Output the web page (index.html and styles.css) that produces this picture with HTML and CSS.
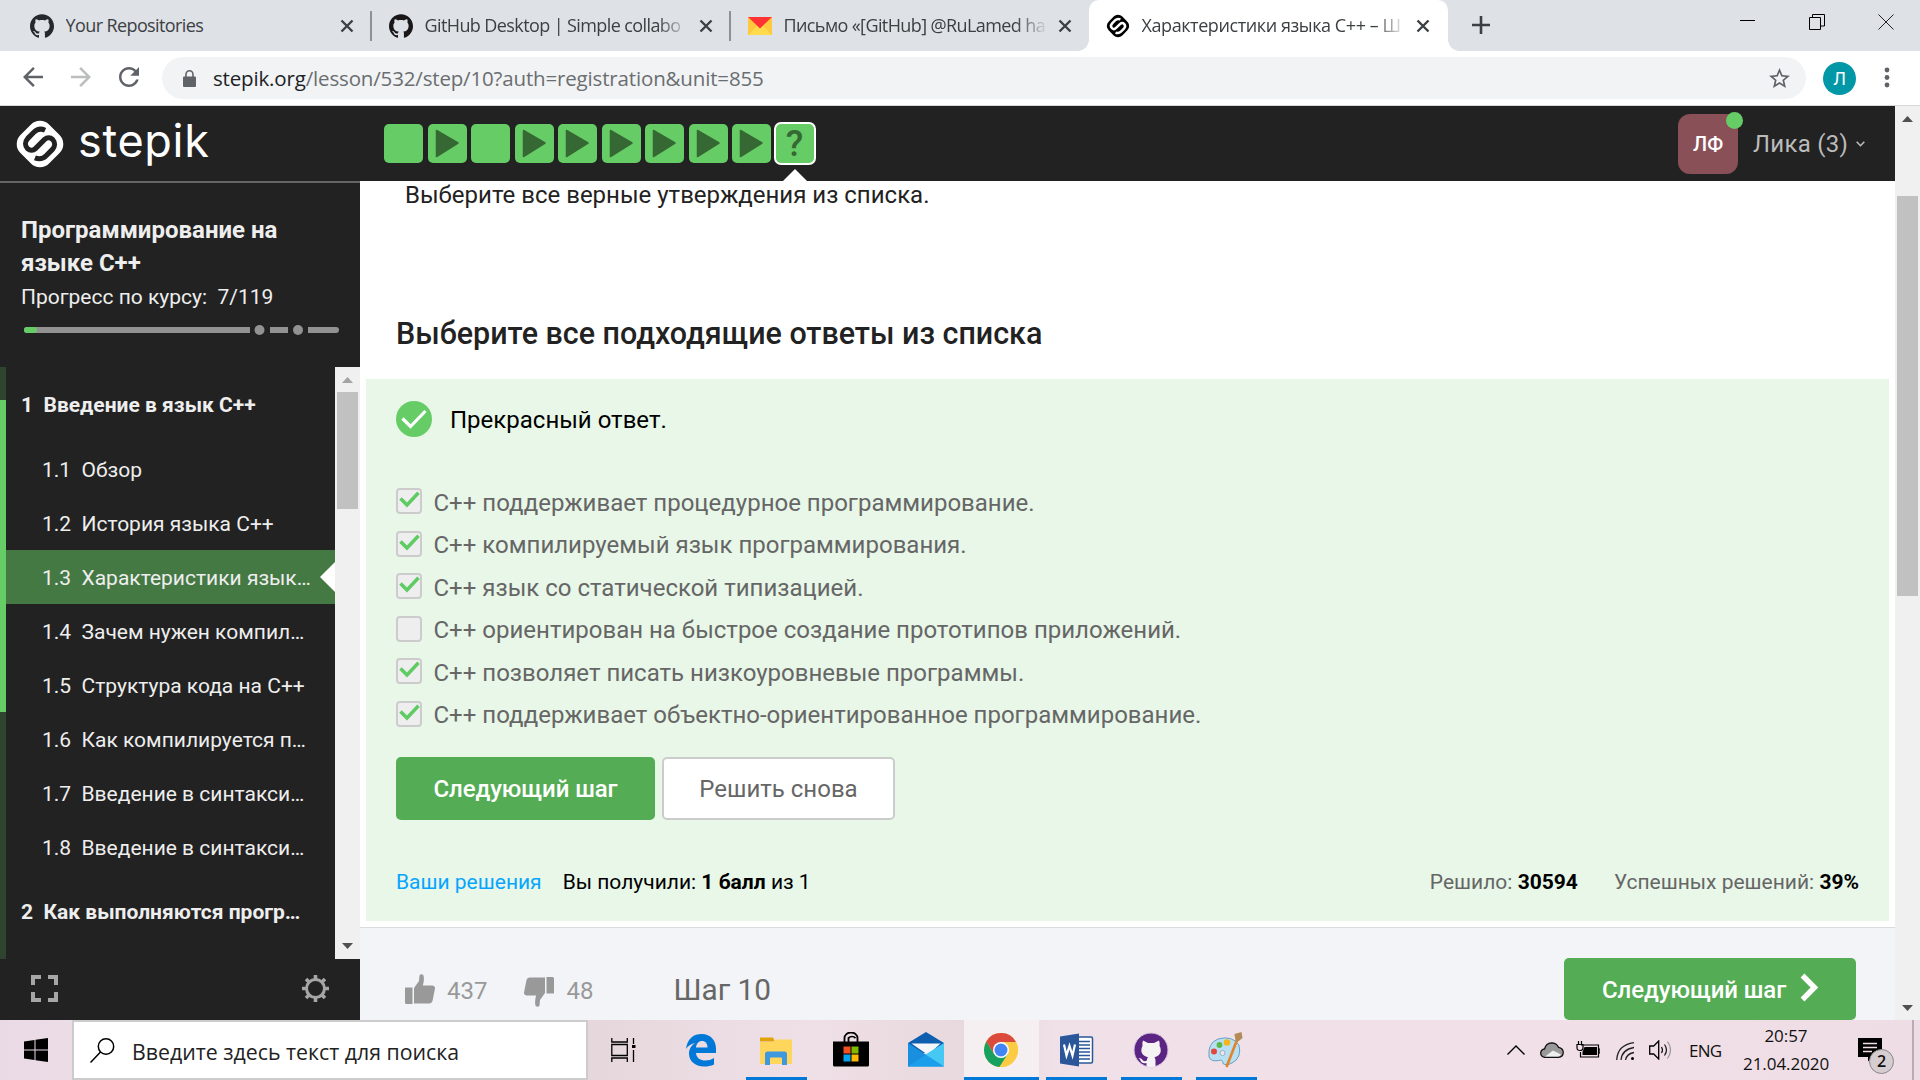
FILE: index.html
```
<!DOCTYPE html>
<html lang="ru">
<head>
<meta charset="utf-8">
<title>Характеристики языка C++ – Шаг 10 – Stepik</title>
<link rel="stylesheet" href="styles.css">
</head>
<body>
<svg class="defs" width="0" height="0">
  <symbol id="github" viewBox="0 0 24 24"><path fill="currentColor" d="M12 .297c-6.63 0-12 5.373-12 12 0 5.303 3.438 9.8 8.205 11.385.6.113.82-.258.82-.577 0-.285-.01-1.04-.015-2.04-3.338.724-4.042-1.61-4.042-1.61C4.422 18.07 3.633 17.7 3.633 17.7c-1.087-.744.084-.729.084-.729 1.205.084 1.838 1.236 1.838 1.236 1.07 1.835 2.809 1.305 3.495.998.108-.776.417-1.305.76-1.605-2.665-.3-5.466-1.332-5.466-5.93 0-1.31.465-2.38 1.235-3.22-.135-.303-.54-1.523.105-3.176 0 0 1.005-.322 3.3 1.23.96-.267 1.98-.399 3-.405 1.02.006 2.04.138 3 .405 2.28-1.552 3.285-1.23 3.285-1.23.645 1.653.24 2.873.12 3.176.765.84 1.23 1.91 1.23 3.22 0 4.61-2.805 5.625-5.475 5.92.42.36.81 1.096.81 2.22 0 1.606-.015 2.896-.015 3.286 0 .315.21.69.825.57C20.565 22.092 24 17.592 24 12.297c0-6.627-5.373-12-12-12"/></symbol>
  <symbol id="stepik" viewBox="0 0 49 49"><rect x="4.7" y="4.7" width="39.6" height="39.6" rx="12.5" transform="rotate(45 24.5 24.5)" fill="currentColor"/><path class="logo-s" d="M29.5 11C25 9 21 10.500 18.500 13L12.500 19C9.500 22.200 9.800 26.500 12.300 29C14.800 31.300 18 31 20 29L29 20C31.200 18 34.500 17.800 37 20.200C39.500 23 39.300 27 36.700 29.800L30.500 36C27.800 38.700 23.500 39.600 19.500 38" fill="none" stroke-width="5"/></symbol>
  <symbol id="close" viewBox="0 0 14 14"><path d="M1.500 1.500l11 11M12.500 1.500l-11 11" stroke="#3c4043" stroke-width="2.400" fill="none"/></symbol>
  <symbol id="play" viewBox="0 0 39 39"><path d="M8.500 6.500L30 19 8.500 32.500z" fill="#366834" stroke="#366834" stroke-width="1.500" stroke-linejoin="round"/></symbol>
  <symbol id="tick" viewBox="0 0 26 25"><path d="M4.500 10.500l6.500 6.500L22.500 4.800" stroke="#5fcb63" stroke-width="3.500" fill="none"/></symbol>
  <symbol id="thumb" viewBox="0 0 30 30"><path d="M0 13.500h7.500V30H1.500Q0 30 0 28.500zM9 14l5-7 .5-5.500Q16-.8 18.300 1q1.400 3.500-.4 10.500h9.600q2.700.3 2.500 3L27.500 27q-.7 2.300-3 2.500H9z" fill="#999"/></symbol>
</svg>

<header class="tabs">
  <div class="tab"><svg class="fav gh"><use href="#github"/></svg><span class="tab-title">Your Repositories</span><svg class="x"><use href="#close"/></svg><i class="sep"></i></div>
  <div class="tab"><svg class="fav gh2"><use href="#github"/></svg><span class="tab-title fade">GitHub Desktop | Simple collabo</span><svg class="x"><use href="#close"/></svg><i class="sep"></i></div>
  <div class="tab"><svg class="fav" viewBox="0 0 24 24"><path fill="#ffc83d" d="M0 3h24v18H0z"/><path fill="#ffdb4d" d="M0 21l9-9h6l9 9z"/><path fill="#f33" d="M0 3h24L12 14.500z"/></svg><span class="tab-title fade">Письмо «[GitHub] @RuLamed ha</span><svg class="x"><use href="#close"/></svg><i class="sep none"></i></div>
  <div class="tab active"><svg class="fav black"><use href="#stepik"/></svg><span class="tab-title fade">Характеристики языка C++ – Ш</span><svg class="x"><use href="#close"/></svg><i class="sep none"></i></div>
  <svg class="plus" viewBox="0 0 18 18"><path d="M9 0v18M0 9h18" stroke="#3c4043" stroke-width="2.600"/></svg>
  <div class="win">
    <svg width="16" height="16"><path d="M0 6.500h15" stroke="#000"/></svg>
    <svg width="16" height="16"><path d="M.5 3.500h11v12H.5zM3.500 3V.5h12v11.500H12" stroke="#000" fill="none"/></svg>
    <svg width="16" height="16"><path d="M.5.5l15 15M15.500.5l-15 15" stroke="#222" fill="none"/></svg>
  </div>
</header>

<nav class="toolbar">
  <svg class="nav" viewBox="0 0 24 24"><path fill="#5f6368" d="M20 11H7.830l5.590-5.590L12 4l-8 8 8 8 1.410-1.410L7.830 13H20v-2z"/></svg>
  <svg class="nav" viewBox="0 0 24 24"><path fill="#bbbdbf" d="M4 11h12.170l-5.590-5.590L12 4l8 8-8 8-1.410-1.410L16.170 13H4v-2z"/></svg>
  <svg class="nav" viewBox="0 0 24 24"><path fill="#5f6368" d="M17.650 6.350C16.200 4.900 14.210 4 12 4c-4.420 0-7.990 3.580-7.990 8s3.570 8 7.990 8c3.730 0 6.840-2.550 7.730-6h-2.080c-.82 2.330-3.040 4-5.650 4-3.310 0-6-2.690-6-6s2.690-6 6-6c1.660 0 3.140.69 4.220 1.780L13 11h7V4l-2.350 2.350z"/></svg>
  <div class="url">
    <svg width="13" height="17" viewBox="0 0 13 17"><path d="M1 6.500h11q1 0 1 1V16q0 1-1 1H1q-1 0-1-1V7.500q0-1 1-1z" fill="#5f6368"/><path d="M3 7V4.500a3.500 3.700 0 0 1 7 0V7" fill="none" stroke="#5f6368" stroke-width="1.600"/></svg>
    <span class="addr">stepik.org<span>/lesson/532/step/10?auth=registration&amp;unit=855</span></span>
    <svg class="star" viewBox="0 0 24 24"><path fill="#5f6368" d="M22 9.240l-7.190-.62L12 2 9.190 8.630 2 9.240l5.460 4.730L5.820 21 12 17.270 18.180 21l-1.630-7.030L22 9.240zM12 15.400l-3.760 2.270 1-4.280-3.320-2.880 4.380-.38L12 6.100l1.710 4.040 4.380.38-3.320 2.880 1 4.280L12 15.400z"/></svg>
  </div>
  <span class="profile">Л</span>
  <svg class="dots" width="6" height="22"><circle cx="3" cy="3" r="2.400" fill="#5f6368"/><circle cx="3" cy="10.500" r="2.400" fill="#5f6368"/><circle cx="3" cy="18" r="2.400" fill="#5f6368"/></svg>
</nav>

<div class="page">
  <div class="site">
    <div class="topbar">
      <div class="brand"><svg class="mark"><use href="#stepik"/></svg><span>stepik</span></div>
      <div class="steps">
        <i class="step"></i>
        <i class="step"><svg><use href="#play"/></svg></i>
        <i class="step"></i>
        <i class="step"><svg><use href="#play"/></svg></i>
        <i class="step"><svg><use href="#play"/></svg></i>
        <i class="step"><svg><use href="#play"/></svg></i>
        <i class="step"><svg><use href="#play"/></svg></i>
        <i class="step"><svg><use href="#play"/></svg></i>
        <i class="step"><svg><use href="#play"/></svg></i>
        <i class="step current">?</i>
      </div>
      <div class="user"><span class="avatar">ЛФ</span><span class="name">Лика (3)</span><svg width="9" height="6"><path d="M.7.700l3.800 4 3.800-4" stroke="#bbb" stroke-width="1.600" fill="none"/></svg></div>
    </div>

    <div class="body">
      <aside class="side">
        <div class="course">
          <h1>Программирование на языке C++</h1>
          <p>Прогресс по курсу:&nbsp; 7/119</p>
          <svg width="316" height="10" viewBox="0 0 316 10"><path d="M3 2h223v6H3a3 3 0 0 1 0-6zM246 2h18v6h-18zM284 2h28a3 3 0 0 1 0 6h-28z" fill="#929292"/><circle cx="235.500" cy="5" r="5" fill="#929292"/><circle cx="274" cy="5" r="5" fill="#929292"/><path d="M3 2h7a3 3 0 0 1 0 6H3a3 3 0 0 1 0-6z" fill="#6c6"/></svg>
        </div>
        <div class="menu">
          <div class="rail"><i></i></div>
          <div class="list">
            <div class="sec"><span>1</span>Введение в язык C++</div>
            <div class="item"><span>1.1</span>Обзор</div>
            <div class="item"><span>1.2</span>История языка C++</div>
            <div class="item on"><span>1.3</span>Характеристики язык…</div>
            <div class="item"><span>1.4</span>Зачем нужен компил…</div>
            <div class="item"><span>1.5</span>Структура кода на C++</div>
            <div class="item"><span>1.6</span>Как компилируется п…</div>
            <div class="item"><span>1.7</span>Введение в синтакси…</div>
            <div class="item"><span>1.8</span>Введение в синтакси…</div>
            <div class="sec"><span>2</span>Как выполняются прогр…</div>
          </div>
          <div class="bar"><svg width="11" height="6"><path d="M0 6l5.500-6L11 6z" fill="#a3a3a3"/></svg><i></i><svg width="11" height="6"><path d="M0 0l5.500 6L11 0z" fill="#505050"/></svg></div>
        </div>
        <div class="tools">
          <svg width="27" height="27"><path d="M10 2H2v8M17 2h8v8M10 25H2v-8M17 25h8v-8" fill="none" stroke="#a6a6a6" stroke-width="4"/></svg>
          <svg width="27" height="27" viewBox="-13.500 -13.500 27 27"><circle r="9" fill="none" stroke="#a6a6a6" stroke-width="3"/><path d="M0-13.500V-9M0 13.500V9M-13.500 0H-9M13.500 0H9M-9.500-9.500l3 3M9.500-9.500l-3 3M-9.500 9.500l3-3M9.500 9.500l-3-3" stroke="#a6a6a6" stroke-width="3.600"/></svg>
        </div>
      </aside>

      <main class="main">
        <p class="lead">Выберите все верные утверждения из списка.</p>
        <h2>Выберите все подходящие ответы из списка</h2>
        <section class="quiz">
          <div class="status"><svg width="36" height="36"><circle cx="18" cy="18" r="18" fill="#6c6"/><path d="M6.500 17.500l8 8L29.500 10" stroke="#fff" stroke-width="3.200" fill="none"/></svg><span>Прекрасный ответ.</span></div>
          <div class="opts">
            <div class="opt"><i><svg><use href="#tick"/></svg></i>C++ поддерживает процедурное программирование.</div>
            <div class="opt"><i><svg><use href="#tick"/></svg></i>C++ компилируемый язык программирования.</div>
            <div class="opt"><i><svg><use href="#tick"/></svg></i>C++ язык со статической типизацией.</div>
            <div class="opt"><i></i>C++ ориентирован на быстрое создание прототипов приложений.</div>
            <div class="opt"><i><svg><use href="#tick"/></svg></i>C++ позволяет писать низкоуровневые программы.</div>
            <div class="opt"><i><svg><use href="#tick"/></svg></i>C++ поддерживает объектно-ориентированное программирование.</div>
          </div>
          <div class="buttons"><span class="btn green">Следующий шаг</span><span class="btn plain">Решить снова</span></div>
          <div class="stats"><a>Ваши решения</a><span class="score">Вы получили: <b>1 балл</b> из 1</span><span class="solved">Решило: <b>30594</b></span><span class="rate">Успешных решений: <b>39%</b></span></div>
        </section>
        <footer class="foot">
          <div class="vote"><svg class="up"><use href="#thumb"/></svg>437</div>
          <div class="vote"><svg class="down"><use href="#thumb"/></svg>48</div>
          <div class="num">Шаг 10</div>
          <div class="btn green next">Следующий шаг<svg width="18" height="29"><path d="M2.500 2.500l12 12-12 12" stroke="#fff" stroke-width="5.400" fill="none"/></svg></div>
        </footer>
      </main>
    </div>
  </div>
  <div class="bar page-bar"><svg width="11" height="6"><path d="M0 6l5.500-6L11 6z" fill="#505050"/></svg><i></i><svg width="11" height="6"><path d="M0 0l5.500 6L11 0z" fill="#505050"/></svg></div>
</div>

<div class="taskbar">
  <div class="start"><svg width="24" height="24"><path d="M0 3.500l10.500-1.500v9.500H0zM11.500 1.800L24 0v11.500H11.500zM0 12.500h10.500V22L0 20.500zM11.500 12.500H24V24l-12.500-1.800z"/></svg></div>
  <div class="search"><svg width="25" height="25"><circle cx="16" cy="8.500" r="7.700" fill="none" stroke="#000" stroke-width="1.500"/><path d="M10.500 14L.5 24.500" stroke="#000" stroke-width="1.500"/></svg><span>Введите здесь текст для поиска</span></div>
  <div class="view"><svg width="26" height="24"><path d="M.8 0v4h15.500V0M.8 6.500h15.500v11H.8zM.8 24v-4h15.500v4M22.500 0v6M22.500 12v12" fill="none" stroke="#000" stroke-width="1.300"/><path d="M21 7h3.500v3H21z"/></svg></div>
  <div class="app"><svg width="36" height="36" viewBox="0 0 36 36"><path fill="#0078d7" d="M3 17C4.500 6 11 2 18.500 2 28 2 33 9 33 16.500V21H13c.3 5 4.500 7.500 9.500 7.500 3 0 6-.8 8.500-2.500v6.500C28 34 24.500 34.500 21 34.500 12 34.500 6 29 6 21.500 6 17 8.500 13 12.500 11 8.500 11.500 5 13.500 3 17zM13 15.500h11.500c0-4-2-6.500-5.500-6.500-3.300 0-5.500 2.500-6 6.500z"/></svg></div>
  <div class="app run"><svg width="36" height="36" viewBox="0 0 36 36"><path fill="#e2a30a" d="M2 5.500h13l2 4H2z"/><path fill="#ffd65c" d="M2 10h13l2-2.500h17V32H2z"/><path fill="#3f97dd" d="M7 33V22q0-2.500 2.500-2.500h17Q29 19.500 29 22v11h-5v-6.500q0-1-1-1H13q-1 0-1 1V33z"/></svg></div>
  <div class="app"><svg width="36" height="36" viewBox="0 0 36 36"><path d="M11.500 11V6a6.500 5.500 0 0 1 13 0v5M15.500 11V6a5 5 0 0 1 7 0" fill="none" stroke="#000" stroke-width="1.800"/><path d="M0 9.500h36V33q0 1.500-1.500 1.500h-33Q0 34.500 0 33z"/><path fill="#f25022" d="M10.500 14.500h7v7h-7z"/><path fill="#7fba00" d="M18.500 14.500h7v7h-7z"/><path fill="#00a4ef" d="M10.500 22.500h7v7h-7z"/><path fill="#ffb900" d="M18.500 22.500h7v7h-7z"/></svg></div>
  <div class="app"><svg width="36" height="36" viewBox="0 0 36 36"><path fill="#0f5fb0" d="M0 11L18 0l18 11v10H0z"/><path fill="#f4f6fa" d="M3.500 11.500h29L20 23z"/><path fill="#1a8fe0" d="M0 11l36 23.500H0z"/><path fill="#46c8f5" d="M36 11v23.500L17.500 22.500z"/><path fill="#1b9fea" d="M0 34.500L18 22.800l18 11.700z"/></svg></div>
  <div class="app run hot"><svg width="36" height="36" viewBox="-18 -18 36 36"><circle r="17" fill="#fbcc43"/><path fill="#dc4a3d" d="M-14.700-8.500A17 17 0 0 1 15-8H0L-7 4z"/><path fill="#17a05e" d="M-14.700-8.500A17 17 0 0 0-1.500 17L7 4-7 4z"/><path fill="#fbcc43" d="M15-8A17 17 0 0 1-1.500 17L7 4V-8z"/><circle r="8" fill="#fff"/><circle r="6.500" fill="#4285f4"/></svg></div>
  <div class="app run"><svg width="36" height="36" viewBox="0 0 36 36"><path d="M17 5h16q1.500 0 1.500 1.500v23q0 1.500-1.500 1.500H17z" fill="#fff" stroke="#2b579a" stroke-width="1.500"/><path d="M21 9.500h11M21 13h11M21 16.500h11M21 20h11M21 23.500h11M21 27h11" stroke="#2b579a" stroke-width="1.500"/><path fill="#2b579a" d="M2 4.500L21 1.500v33L2 31.500z"/><path d="M6 12.500l2.500 11 3-9.500 3 9.500 2.500-11" fill="none" stroke="#fff" stroke-width="2.200"/></svg></div>
  <div class="app run"><svg width="36" height="36" viewBox="0 0 36 36"><circle cx="18" cy="18" r="17" fill="#5c2483" stroke="#d8c8e0" stroke-width="1"/><path fill="#f5f2f4" d="M10 8.500l5 2.500h6l5-2.500q1.200 3 .6 5.500 1.400 2 1.200 5-.6 5-6.300 6.200 1 1.500 1 3.300V34.500q-4.500 1-9 0V31Q8 32 7 27.500L5.500 26q3-.5 4.500 2.500 1.500 1.200 3.700.2.200-2 1.200-3.500Q9 24 8.300 19q-.2-3 1.200-5-.6-3 .5-5.500z"/></svg></div>
  <div class="app run"><svg width="36" height="36" viewBox="0 0 36 36"><path d="M1 25Q-.5 11 10 7 24 3 31 13 34 26 24 31 18 34 15 31.500 15 27 10.500 28.500 3 30 1 25z" fill="#b9dff2" stroke="#6a9fc2"/><circle cx="14.500" cy="21" r="2.500" fill="#f2e4ea" stroke="#7aa8c4" stroke-width=".8"/><circle cx="6" cy="19.500" r="3" fill="#e2483a"/><circle cx="11.500" cy="13" r="2.900" fill="#57b947"/><circle cx="19" cy="10.500" r="3.300" fill="#f5b51d"/><path d="M29 8L18.500 35" stroke="#df8429" stroke-width="2.600"/><path d="M26.500 2l7-2 1 6-5 4-2-1.500z" fill="#b48a58"/></svg></div>
  <div class="tray">
    <svg width="18" height="10"><path d="M.5 9.500L9 1l8.500 8.500" fill="none" stroke="#000" stroke-width="1.400"/></svg>
    <svg class="cloud" width="24" height="16"><path d="M4.500 15.300Q.7 14.500.7 11 1 7.500 4.500 7 6 1 11.500.8 16.500.8 18.500 5.300 23 6 23.300 10.500 23 15 18.500 15.300z" fill="#999" stroke="#111" stroke-width="1.300"/><path d="M5 14.500l8-6 8 4q-1 2-3 2z" fill="#eee"/></svg>
    <svg class="batt" width="24" height="17"><path d="M5 4h17.500v12H4.500v-5M23 8h1v4h-1M1 3.500h6V7q0 2.500-3 2.500T1 7zM2.500 0v3M5.500 0v3" fill="none" stroke="#000" stroke-width="1.200"/><path d="M8.500 6H21v8H6.500v-3z"/></svg>
    <svg class="wifi" width="18" height="18"><path d="M.7 18Q1.500 3 18 .7M5 18Q6 7.500 18 5.500M9.500 18Q10.500 12 18 10.500" fill="none" stroke="#222" stroke-width="1.300"/><circle cx="16.500" cy="16.500" r="1.500"/></svg>
    <svg class="snd" width="22" height="20"><path d="M.7 6h4l5-5v18l-5-5h-4z" fill="none" stroke="#000" stroke-width="1.300"/><path d="M12.500 7q2 3 0 6M15.500 4.500q4 5.500 0 11" fill="none" stroke="#111" stroke-width="1.200"/><path d="M18.500 1.500q6 8.500 0 17" fill="none" stroke="#999" stroke-width="1.200"/></svg>
    <span class="lang">ENG</span>
    <div class="clock"><span>20:57</span><span>21.04.2020</span></div>
    <div class="note"><svg width="24" height="24"><path d="M0 0h24v19H14.500L10 23.500V19H0z"/><path d="M5 5.500h14M5 9.500h14M5 13.500h9" stroke="#f0dfe7" stroke-width="1.300"/></svg><span>2</span></div>
    <i class="edge"></i>
  </div>
</div>
</body>
</html>
```
FILE: styles.css
```
* { box-sizing: border-box; }
body { margin: 0; width: 1920px; height: 1080px; overflow: hidden; display: flex; flex-direction: column; font-family: Roboto, sans-serif; white-space: nowrap; background: #fff; }
svg { display: block; flex: none; }
i { display: block; font-style: normal; }
h1, h2, p { margin: 0; }
.defs { position: absolute; }

/* browser tabs */
.tabs { height: 51px; flex: none; display: flex; background: #dee1e6; padding-left: 12.5px; font-family: "Open Sans", sans-serif; }
.tab { width: 359px; display: flex; align-items: center; padding-left: 17px; position: relative; }
.fav { width: 24px; height: 24px; margin-right: 12px; }
.gh { color: #24292e; }
.gh2 { color: #191717; }
.black { color: #000; --mark: #fff; }
.tab-title { width: 264px; overflow: hidden; font-size: 18px; letter-spacing: -0.6px; line-height: 30px; padding-bottom: 2px; color: #3c4043; }
.fade { -webkit-mask-image: linear-gradient(90deg, #000 88%, transparent); mask-image: linear-gradient(90deg, #000 88%, transparent); }
.active .tab-title { letter-spacing: -0.42px; }
.x { width: 14px; height: 14px; margin: 0 0 0 10px; }
.sep { width: 2px; height: 30px; margin-left: auto; background: #8d9196; }
.sep.none { background: none; }
.active { background: #fff; border-radius: 10px 10px 0 0; margin-left: -1px; }
.active::before, .active::after { content: ""; position: absolute; bottom: 0; width: 11px; height: 11px; }
.active::before { left: -11px; background: radial-gradient(circle at 0 0, transparent 10.5px, #fff 11px); }
.active::after { right: -11px; background: radial-gradient(circle at 100% 0, transparent 10.5px, #fff 11px); }
.plus { width: 18px; height: 18px; margin: 16px 0 0 24px; }
.win { margin: 14px 26px 0 auto; display: flex; gap: 53px; }

/* browser toolbar */
.toolbar { height: 55px; flex: none; display: flex; align-items: center; border-bottom: 1px solid #d5d7da; padding: 0 30px 0 18px; }
.nav { width: 30px; height: 30px; margin: -3px 18px 0 0; }
.url { width: 1644px; height: 42px; border-radius: 21px; background: #f1f3f4; display: flex; align-items: center; padding: 0 14px 0 21px; }
.addr { font: 20.5px "Open Sans", sans-serif; letter-spacing: -0.16px; color: #202124; margin-left: 17px; flex: 1; }
.addr span { color: #6a6d71; }
.star { width: 25px; height: 25px; }
.profile { width: 33px; height: 33px; margin-left: 17px; border-radius: 50%; background: #0097a7; color: #fff; font: 18px/33px Roboto, sans-serif; text-align: center; }
.dots { margin-left: auto; }

/* page */
.page { height: 914px; flex: none; display: flex; }
.site { width: 1895px; display: flex; flex-direction: column; }
.topbar { height: 75px; background: #222; display: flex; align-items: center; }
.brand { width: 384px; display: flex; align-items: center; padding-left: 15px; color: #fff; }
.mark { width: 50px; height: 50px; }
.logo-s { stroke: var(--mark, #222); }
.brand span { font: 400 45px/50px Inter, sans-serif; letter-spacing: 0.7px; margin: -6px 0 0 13px; }
.steps { display: flex; gap: 4.5px; }
.step { width: 39px; height: 39px; border-radius: 5px; background: #6c6; }
.step svg { width: 39px; height: 39px; }
.current { position: relative; box-shadow: 0 0 0 2px #fff; width: 38px; color: #366834; font: 500 36px/41px Roboto, sans-serif; text-align: center; }
.current::after { content: ""; position: absolute; left: 6px; top: 45px; border: 13px solid transparent; border-top: 0; border-bottom-color: #fff; }
.user { margin-left: auto; padding-right: 30px; display: flex; align-items: center; }
.avatar { position: relative; width: 60px; height: 60px; border-radius: 12px; background: #8a5058; color: #fff; font: 500 20px/60px Roboto, sans-serif; text-align: center; }
.avatar::after { content: ""; position: absolute; right: -5px; top: -2px; width: 17px; height: 17px; border-radius: 50%; background: #6c6; }
.name { font-size: 24px; letter-spacing: 0.25px; color: #bbb; margin: 0 8px 0 15px; }

.body { flex: 1; display: flex; min-height: 0; }
.side { width: 360px; background: #222; display: flex; flex-direction: column; border-top: 2px solid #666; color: #eee; }
.course { height: 184px; padding: 31px 21px 0; }
.course h1 { font: 700 24px/33px Roboto, sans-serif; white-space: normal; }
.course p { font-size: 21px; line-height: 35px; }
.course svg { margin: 10px 0 0 3px; }
.menu { height: 592px; display: flex; }
.rail { width: 6px; background: #2f442f; padding-top: 33px; }
.rail i { height: 312px; background: #6c6; }
.list { flex: 1; font-size: 21px; }
.sec { height: 75px; line-height: 77px; padding-left: 15px; font-weight: 700; }
.sec span { display: inline-block; width: 22.5px; }
.item { height: 54px; line-height: 56px; padding-left: 36px; position: relative; }
.item span { display: inline-block; width: 39.5px; }
.on { background: #457944; }
.on::after { content: ""; position: absolute; right: 0; top: 12px; border: 15px solid transparent; border-left: 0; border-right-color: #fff; }
.bar { width: 25px; background: #f0f0f0; display: flex; flex-direction: column; align-items: center; padding: 10px 0; }
.bar i { width: 21px; height: 117px; margin: 9px 0 auto; background: #c1c1c1; }
.tools { flex: 1; display: flex; justify-content: space-between; padding: 16px 31px 0; }

.main { flex: 1; display: flex; flex-direction: column; color: #222; }
.lead { font-size: 24px; line-height: 28px; padding-left: 45px; }
h2 { font: 500 30.45px/40px Roboto, sans-serif; margin: 105px 0 25px 36px; }
.quiz { margin: 0 6px; height: 542px; background: #e8f7e8; padding: 22px 30px 0; }
.status { display: flex; align-items: center; gap: 18px; height: 36px; font-size: 24px; color: #000; }
.status span { padding-top: 2px; }
.opts { padding-top: 44.5px; }
.opt { height: 42.5px; display: flex; align-items: center; font-size: 24px; color: #666; line-height: 42px; }
.opt i { width: 26px; height: 26px; border: 2px solid #ccc; border-radius: 4px; background: #eee; margin: -3px 11.5px 0 0; }
.opt svg { width: 26px; height: 25px; margin: -2px; }
.buttons { display: flex; gap: 7px; padding-top: 20.5px; }
.btn { height: 63px; border-radius: 5px; font: 400 24px/65px Roboto, sans-serif; text-align: center; }
.green { width: 259px; background: #54ad54; color: #fff; font-weight: 500; letter-spacing: -0.08px; }
.plain { width: 233px; background: #fff; border: 2px solid #ccc; color: #666; line-height: 61px; }
.stats { display: flex; margin-top: 48px; font-size: 21px; line-height: 28px; color: #000; }
.stats a { color: #07a5ff; }
.stats b { font-weight: 700; }
.score { margin-left: 21px; }
.solved { margin-left: auto; color: #666; }
.rate { margin-left: 36px; color: #666; }
.solved b, .rate b { color: #000; }
.foot { height: 93px; margin-top: 6px; border-top: 1px solid #d9dbde; background: #f2f4f7; display: flex; padding: 30px 39px 0 45px; color: #999; font-size: 24px; line-height: 67px; }
.vote { display: flex; margin-right: 37px; }
.vote svg { width: 30px; height: 30px; margin: 16px 12px 0 0; }
.vote .down { transform: rotate(180deg); margin-top: 19px; }
.num { margin-left: 43px; font-size: 29.8px; line-height: 64px; color: #666; }
.next { margin-left: auto; width: 292px; height: 62px; display: flex; padding-left: 38px; line-height: 64px; }
.next svg { margin: 15px 0 0 14px; }
.page-bar i { height: 400px; margin-top: 74px; }
.page-bar { padding-bottom: 9px; }

/* taskbar */
.taskbar { height: 60px; flex: none; display: flex; background: linear-gradient(90deg, #e9dae6 0, #ebdce6 72px, #e6d7dc 600px, #ecdde4 720px, #efdfe6 820px, #e7d9dd 960px, #f0e0e7 1060px, #f1e0e7 1500px, #eedde5 1920px); }
.start { width: 72px; padding: 18px 24px; }
.search { width: 516px; border: 2px solid #ccc; background: #fff; display: flex; padding: 16px 0 0 16px; font: 21.3px/31px "Open Sans", sans-serif; color: #222; }
.search span { margin: -2px 0 0 17px; }
.view { width: 75.5px; padding: 18px 0 0 23px; }
.app { width: 75px; height: 60px; display: flex; justify-content: center; padding-top: 12px; position: relative; }
.run::after { content: ""; position: absolute; bottom: 0; left: 7px; width: 61px; height: 3px; background: #0078d7; }
.hot { background: #f6eff2; }
.hot::after { left: 0; width: 75px; }
.tray { margin-left: auto; display: flex; align-items: center; font: 17px "Open Sans", sans-serif; color: #111; }
.cloud { margin-left: 15px; }
.batt { margin: -2px 0 0 12px; }
.wifi { margin: 2px 0 0 16px; }
.snd { margin-left: 15px; }
.lang { width: 32px; margin-left: 18px; letter-spacing: -0.8px; }
.clock { width: 86px; margin-left: 22px; display: flex; flex-direction: column; text-align: center; line-height: 28px; letter-spacing: -0.05px; }
.note { position: relative; width: 36px; margin: -1px 0 0 29px; }
.note span { position: absolute; left: 11px; top: 11px; width: 25px; height: 25px; border-radius: 50%; border: 1px solid #888; background: #d6cdd1; font: 600 16px/23px "Open Sans", sans-serif; text-align: center; }
.edge { width: 2px; height: 60px; margin: 0 6px 0 18px; background: #b9adb3; }
```
